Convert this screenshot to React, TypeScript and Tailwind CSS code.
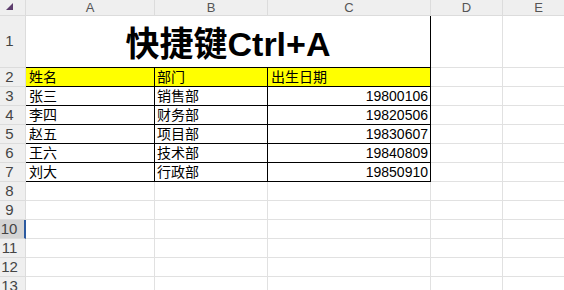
import React from 'react';

const cols = [
  { key: 'A', w: 129 },
  { key: 'B', w: 113 },
  { key: 'C', w: 163 },
  { key: 'D', w: 72 },
  { key: 'E', w: 72 },
];

const rows = [
  ['张三', '销售部', '19800106'],
  ['李四', '财务部', '19820506'],
  ['赵五', '项目部', '19830607'],
  ['王六', '技术部', '19840809'],
  ['刘大', '行政部', '19850910'],
];

const font = { fontFamily: '"Liberation Sans", "Noto Sans CJK SC", sans-serif' };

const RowHead: React.FC<{ n: number; h: string; active?: boolean }> = ({ n, h, active }) => (
  <div
    className={`flex items-center justify-center pr-[6px] text-[15px] text-[#444] border-b border-r ${
      active ? 'bg-[#d4d4d4] border-r-2 border-r-[#2c5aa0] border-b-[#dcdcdc]' : 'bg-[#efefef] border-[#dcdcdc]'
    } ${h}`}
  >
    {n}
  </div>
);

const Blank: React.FC<{ n: number; active?: boolean }> = ({ n, active }) => (
  <div className="flex">
    <div className="w-[26px] shrink-0">
      <RowHead n={n} h="h-[19px]" active={active} />
    </div>
    <div className="w-[129px] h-[19px] border-r border-b border-[#e1e1e1] shrink-0" />
    <div className="w-[113px] h-[19px] border-r border-b border-[#e1e1e1] shrink-0" />
    <div className="w-[163px] h-[19px] border-r border-b border-[#e1e1e1] shrink-0" />
    <div className="w-[72px] h-[19px] border-r border-b border-[#e1e1e1] shrink-0" />
    <div className="w-[72px] h-[19px] border-r border-b border-[#e1e1e1] shrink-0" />
  </div>
);

export default function App() {
  return (
    <div className="w-[564px] h-[290px] overflow-hidden bg-white" style={font}>
      <div className="w-[600px]">
        {/* column headers */}
        <div className="flex h-[16px]">
          <div className="w-[26px] shrink-0 bg-[#efefef] border-r border-b border-[#dcdcdc] relative">
            <svg width="7" height="7" viewBox="0 0 7 7" className="absolute left-[6px] top-[3px]">
              <polygon points="7,0 7,7 0,7" fill="#5d3d6d" />
            </svg>
          </div>
          {cols.map((c) => (
            <div
              key={c.key}
              style={{ width: c.w }}
              className="shrink-0 bg-[#efefef] border-r border-b border-[#dcdcdc] flex items-center justify-center text-[13px] text-[#555] leading-none"
            >
              {c.key}
            </div>
          ))}
        </div>

        {/* row 1: title */}
        <div className="flex">
          <div className="w-[26px] shrink-0">
            <RowHead n={1} h="h-[52px]" />
          </div>
          <div className="w-[405px] h-[52px] shrink-0 border-r border-b border-black flex items-center justify-center pt-[4px] text-[34px] font-bold text-black leading-none">
            快捷键Ctrl+A
          </div>
          <div className="w-[72px] h-[52px] border-r border-b border-[#e1e1e1] shrink-0" />
          <div className="w-[72px] h-[52px] border-r border-b border-[#e1e1e1] shrink-0" />
        </div>

        {/* row 2: header */}
        <div className="flex">
          <div className="w-[26px] shrink-0">
            <RowHead n={2} h="h-[19px]" />
          </div>
          <div className="w-[129px] h-[19px] shrink-0 bg-[#ffff00] border-r border-b border-black flex items-center pl-[3px] text-[14px] text-black">
            姓名
          </div>
          <div className="w-[113px] h-[19px] shrink-0 bg-[#ffff00] border-r border-b border-black flex items-center pl-[2px] text-[14px] text-black">
            部门
          </div>
          <div className="w-[163px] h-[19px] shrink-0 bg-[#ffff00] border-r border-b border-black flex items-center pl-[3px] text-[14px] text-black">
            出生日期
          </div>
          <div className="w-[72px] h-[19px] border-r border-b border-[#e1e1e1] shrink-0" />
          <div className="w-[72px] h-[19px] border-r border-b border-[#e1e1e1] shrink-0" />
        </div>

        {/* data rows */}
        {rows.map((r, i) => (
          <div className="flex" key={i}>
            <div className="w-[26px] shrink-0">
              <RowHead n={i + 3} h="h-[19px]" />
            </div>
            <div className="w-[129px] h-[19px] shrink-0 border-r border-b border-black flex items-center pl-[3px] text-[14px] text-black">
              {r[0]}
            </div>
            <div className="w-[113px] h-[19px] shrink-0 border-r border-b border-black flex items-center pl-[2px] text-[14px] text-black">
              {r[1]}
            </div>
            <div className="w-[163px] h-[19px] shrink-0 border-r border-b border-black flex items-center justify-end pr-[2px] text-[14px] text-black">
              {r[2]}
            </div>
            <div className="w-[72px] h-[19px] border-r border-b border-[#e1e1e1] shrink-0" />
            <div className="w-[72px] h-[19px] border-r border-b border-[#e1e1e1] shrink-0" />
          </div>
        ))}

        <Blank n={8} />
        <Blank n={9} />
        <Blank n={10} active />
        <Blank n={11} />
        <Blank n={12} />
        <Blank n={13} />
      </div>
    </div>
  );
}
